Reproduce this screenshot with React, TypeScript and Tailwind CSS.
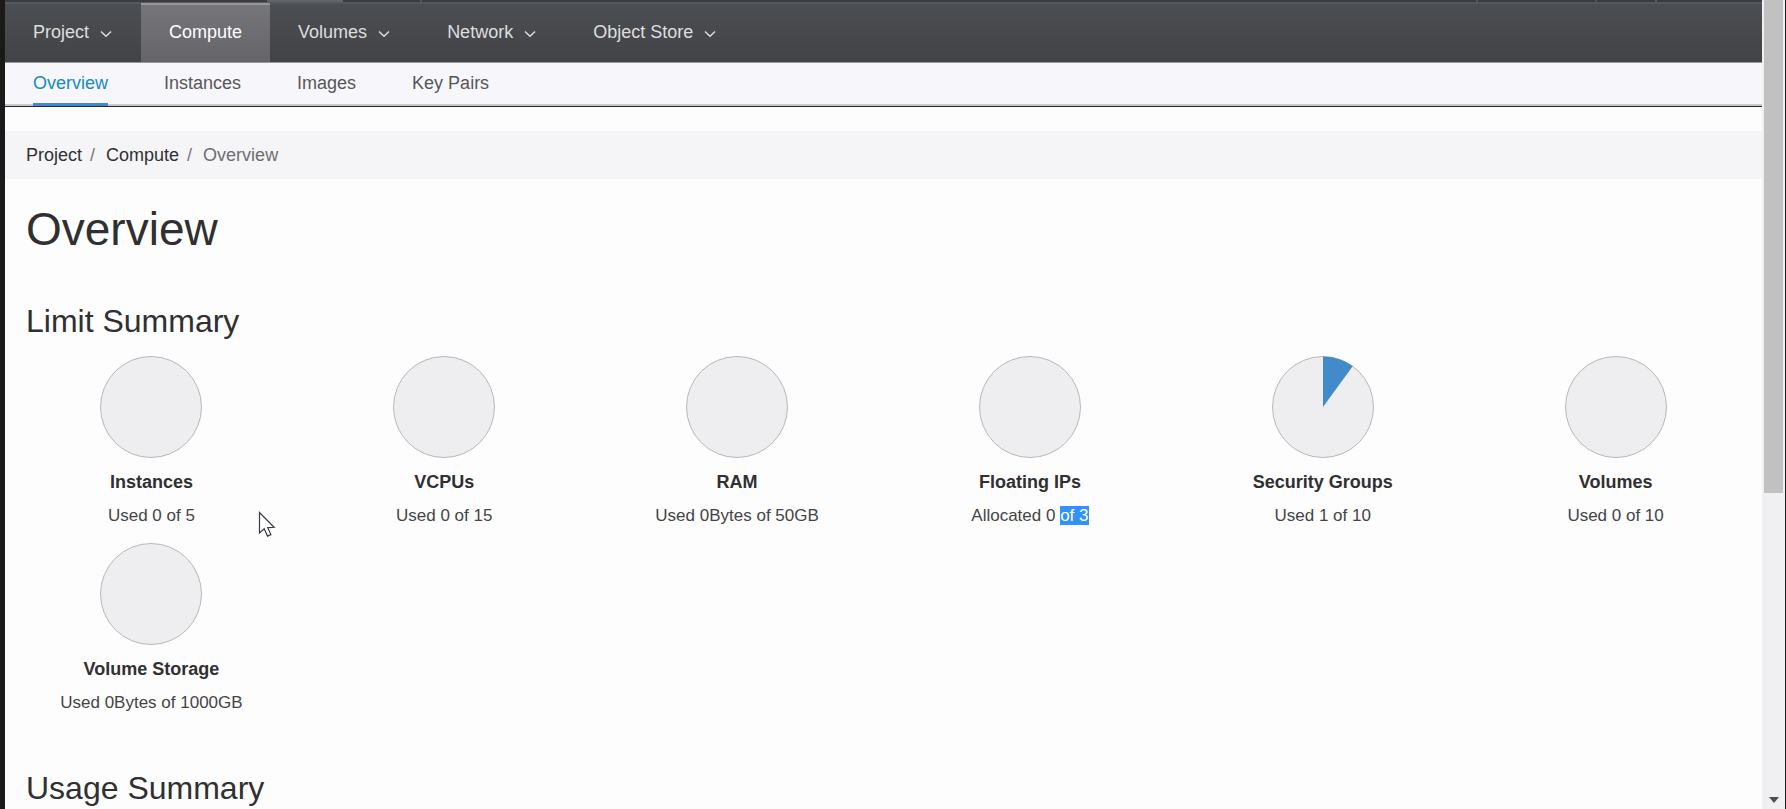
type Limit = { name: string; caption: string; selected?: string; used: number; total: number };

const limits: Limit[] = [
  { name: 'Instances', caption: 'Used 0 of 5', used: 0, total: 5 },
  { name: 'VCPUs', caption: 'Used 0 of 15', used: 0, total: 15 },
  { name: 'RAM', caption: 'Used 0Bytes of 50GB', used: 0, total: 50 },
  { name: 'Floating IPs', caption: 'Allocated 0 ', selected: 'of 3', used: 0, total: 3 },
  { name: 'Security Groups', caption: 'Used 1 of 10', used: 1, total: 10 },
  { name: 'Volumes', caption: 'Used 0 of 10', used: 0, total: 10 },
  { name: 'Volume Storage', caption: 'Used 0Bytes of 1000GB', used: 0, total: 1000 },
];

const menus = [
  { label: 'Project' },
  { label: 'Compute', active: true },
  { label: 'Volumes' },
  { label: 'Network' },
  { label: 'Object Store' },
];

const panels = ['Overview', 'Instances', 'Images', 'Key Pairs'];

function Chevron() {
  return (
    <svg className="mt-1 h-[14px] w-[14px]" viewBox="0 0 14 14" fill="none" stroke="currentColor" strokeWidth="1.5" aria-hidden="true">
      <path d="M2 4.500 7 9.300l5-4.800" />
    </svg>
  );
}

function Pie({ used, total }: { used: number; total: number }) {
  const angle = (used / total) * 2 * Math.PI;
  const x = 51 + 50.5 * Math.sin(angle);
  const y = 51 - 50.5 * Math.cos(angle);
  return (
    <svg className="h-[102px] w-[102px]" viewBox="0 0 102 102" aria-hidden="true">
      <circle cx="51" cy="51" r="50.500" fill="#eeeef0" stroke="#b8b8ba" strokeWidth="1" />
      {used > 0 && <path d={`M51 51V.5A50.5 50.5 0 0 1 ${x} ${y}Z`} fill="#428bca" />}
    </svg>
  );
}

function TopEdge() {
  return (
    <div className="flex h-[2px] bg-[#393c40]">
      <span className="ml-[262px] w-[76px] bg-[#626468]" />
      <span className="ml-[77px] w-[2px] bg-[#55585b]" />
      <span className="mr-[117px] ml-auto w-[2px] bg-[#55585b]" />
      <span className="mr-[58px] w-[2px] bg-[#55585b]" />
      <span className="mr-[105px] w-[2px] bg-[#55585b]" />
    </div>
  );
}

export default function App() {
  return (
    <div className="relative flex h-screen overflow-hidden border-l-[5px] border-r border-l-[#1a1a1a] border-r-[#1b1b1f] bg-[#fdfdfd] font-['Liberation_Sans',Arial,sans-serif] text-lg text-[#303032]">
      <div className="min-w-0 flex-1">
        <header>
          <TopEdge />
          <nav className="flex h-[61px] border-t-2 border-b border-t-[#55585c] border-b-[#98979b] bg-linear-to-b from-[#4b4e52] to-[#424347]">
            {menus.map((m) => (
              <button
                key={m.label}
                className={
                  m.active
                    ? '-mt-px flex items-center border-t-2 border-[#96969a] bg-linear-to-b from-[#76757a] to-[#646469] px-7 pb-1 text-white'
                    : 'flex items-center gap-[10px] px-7 pb-[2px] text-[#dededf]'
                }
              >
                {m.label}
                {!m.active && <Chevron />}
              </button>
            ))}
          </nav>
          <nav className="flex h-11 gap-14 border-b border-[#28282c] bg-[#f7f6fa] px-7 shadow-[inset_0_-2px_0_#c9c9cd]">
            {panels.map((p, i) => (
              <a
                key={p}
                href="#"
                className={
                  i === 0
                    ? 'flex items-center border-b-[3px] border-[#428bca] text-[#158bbd]'
                    : 'flex items-center border-b-[3px] border-transparent text-[#56565a]'
                }
              >
                {p}
              </a>
            ))}
          </nav>
        </header>

        <main className="pt-6">
          <ol className="flex h-12 items-center bg-[#f5f5f8] px-[21px]">
            <li><a href="#">Project</a><span className="px-2 text-[#77777a]">/</span></li>
            <li className="pl-[3px]"><a href="#">Compute</a><span className="px-2 text-[#77777a]">/</span></li>
            <li className="pl-[3px] text-[#6d6d70]">Overview</li>
          </ol>

          <h1 className="mt-[25px] px-[21px] text-[46px] leading-[50px]">Overview</h1>

          <section className="mt-[47px]">
            <h2 className="px-[21px] text-[32px] leading-10">Limit Summary</h2>
            <ul className="mt-[15px] grid grid-cols-6">
              {limits.map((l) => (
                <li key={l.name} className="flex flex-col items-center pb-[14px] text-center">
                  <Pie used={l.used} total={l.total} />
                  <strong className="mt-[11px] leading-[26px]">{l.name}</strong>
                  <span className="mt-2 text-[17px] leading-[26px] text-[#444446]">
                    {l.caption}
                    {l.selected && <mark className="bg-[#3390ff] text-white">{l.selected}</mark>}
                  </span>
                </li>
              ))}
            </ul>
          </section>

          <section className="mt-[38px]">
            <h2 className="px-[21px] text-[32px] leading-10">Usage Summary</h2>
          </section>
        </main>
      </div>

      <div className="flex w-[23px] flex-col items-center justify-between bg-[#f0eff2]" aria-hidden="true">
        <div className="h-[61%] w-[19px] bg-[#c1c1c1]" />
        <svg className="mb-[6px] h-[6px] w-[10px]" viewBox="0 0 10 6">
          <path d="M0 0h10L5 6z" fill="#505054" />
        </svg>
      </div>

      <svg className="absolute top-[511px] left-[253px] h-[27px] w-[18px]" viewBox="0 0 18 27" aria-hidden="true">
        <path d="M1.500 1.500V22l4.700-4.200 3.300 7.300 3.400-1.500-3.200-7 6.400-.3z" fill="#fff" stroke="#3a3a48" strokeWidth="1.200" />
      </svg>
    </div>
  );
}
